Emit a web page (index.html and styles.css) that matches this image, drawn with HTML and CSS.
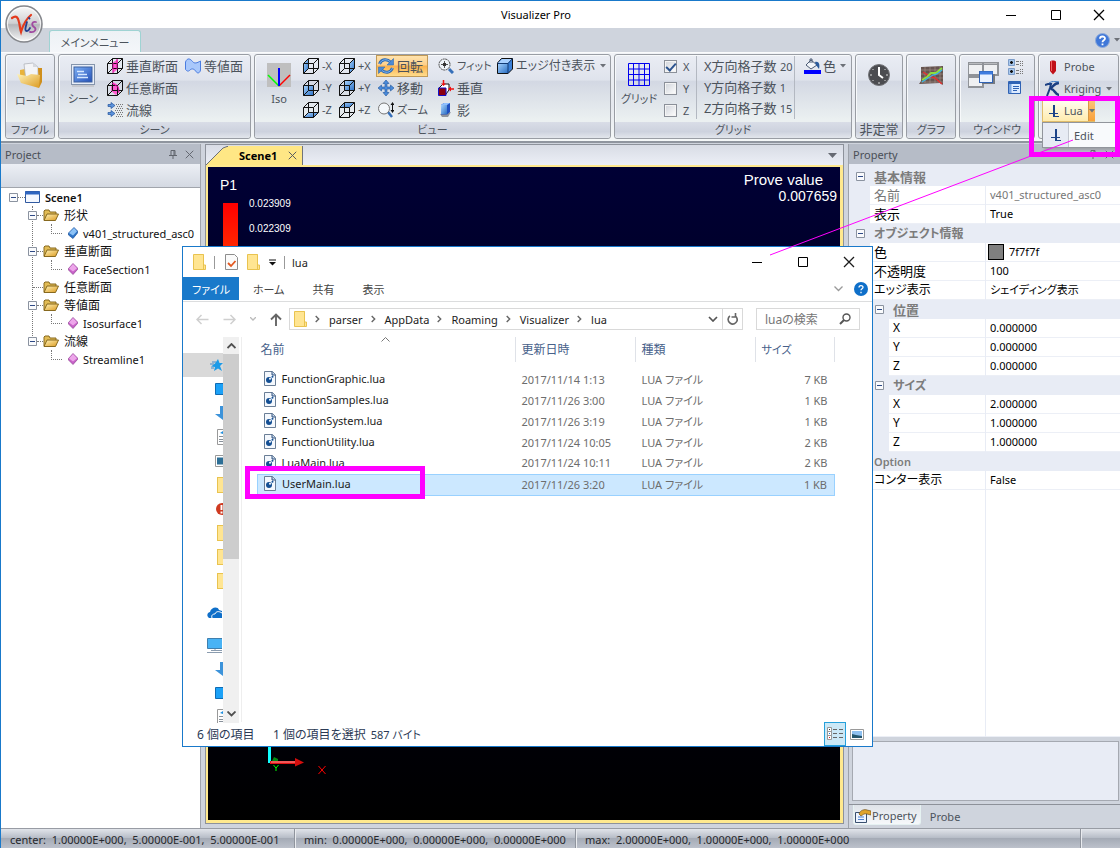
FILE: index.html
```html
<!DOCTYPE html>
<html lang="ja">
<head>
<meta charset="utf-8">
<title>Visualizer Pro</title>
<link rel="stylesheet" href="styles.css">
</head>
<body>
<svg class="defs" aria-hidden="true">
  <defs>
    <linearGradient id="gBlue" x1="0" y1="0" x2="1" y2="1"><stop offset="0" stop-color="#a8d4ff"/><stop offset="1" stop-color="#2a6fc4"/></linearGradient>
    <linearGradient id="gGold" x1="0" y1="0" x2="1" y2="1"><stop offset="0" stop-color="#fff3b8"/><stop offset="1" stop-color="#dc9a20"/></linearGradient>
    <linearGradient id="gPink" x1="0" y1="0" x2="1" y2="1"><stop offset="0" stop-color="#f6b8f4"/><stop offset="1" stop-color="#9c3aa0"/></linearGradient>
    <linearGradient id="gOrb" x1="0" y1="0" x2="0" y2="1"><stop offset="0" stop-color="#fafafa"/><stop offset=".48" stop-color="#cfd0d2"/><stop offset=".52" stop-color="#b4b6ba"/><stop offset="1" stop-color="#f8f8f8"/></linearGradient>
    <linearGradient id="gScreen" x1="0" y1="0" x2="1" y2="1"><stop offset="0" stop-color="#7eb0f4"/><stop offset="1" stop-color="#2350b8"/></linearGradient>
  </defs>
  <symbol id="cube" viewBox="0 0 16 16"><path d="M.5 5.500h10v10h-10zM5.500.500h10v10h-10zM.5 5.500l5-5M10.500 5.500l5-5M.5 15.500l5-5M10.500 15.500l5-5" fill="none" stroke="#111"/></symbol>
  <symbol id="dd" viewBox="0 0 6 4"><path d="M0 0h6L3 3.500z" fill="#6d7178"/></symbol>
  <symbol id="folder" viewBox="0 0 16 12"><path d="M1 11V2l1-1h4l1 2h6v2" fill="#e2bc55" stroke="#87691f"/><path d="M1 11.500L4 5h11.500l-3 6.500z" fill="url(#gGold)" stroke="#87691f"/></symbol>
  <symbol id="gem" viewBox="0 0 10 12"><path d="M5 .5L9.500 5v1.500L5 11.500.5 7V5.500z" fill="#c860c8" stroke="#8e4292" stroke-width=".7"/><path d="M5 1l4 4.200-4 3.300-4-3z" fill="#eda6ea"/></symbol>
  <symbol id="gemblue" viewBox="0 0 10 12"><path d="M6 .5L9.500 4v2L5 11.500.5 8V6z" fill="#2c74c8" stroke="#1d5299" stroke-width=".7"/><path d="M6 1l3 3.200-4 4.300-4-2.500z" fill="#8cc2f6"/></symbol>
  <symbol id="yfolder" viewBox="0 0 13 16"><path d="M.5.500h10v10.500h2v4.500H.5z" fill="#ffe592" stroke="#e9c34f"/><path d="M10.500 11v4.500M10.500.500v9" stroke="#e9c34f"/></symbol>
  <symbol id="luafile" viewBox="0 0 12 15"><path d="M.5.500h8l3 3v11H.5z" fill="#f4f8fd" stroke="#6a7e96"/><path d="M8 .5v3.500h3.500" fill="#c7d8ec" stroke="#31507c"/><circle cx="5" cy="9" r="3" fill="#134f94"/><circle cx="6" cy="7.700" r="1" fill="#fff"/><circle cx="8.500" cy="5.800" r="1" fill="#134f94"/></symbol>
  <symbol id="lua" viewBox="0 0 10 12"><path d="M5 0v12" stroke="#1c4388" stroke-width="2"/><path d="M0 8.500h9M5 11.500h5" stroke="#1c4388" stroke-width="1.200"/></symbol>
  <symbol id="pin" viewBox="0 0 8 9"><path d="M2 .5h4v5H2zM0 5.500h8M4 5.500V9M5 .5v5" fill="none" stroke="#60646c"/></symbol>
  <symbol id="close" viewBox="0 0 12 12"><path d="M1 1l10 10M11 1L1 11" fill="none" stroke="currentColor" stroke-width="1.300"/></symbol>
  <symbol id="minus" viewBox="0 0 9 9"><path d="M.5.500h8v8h-8z" fill="#fafbfd" stroke="#8b93a0"/><path d="M2 4.500h5" stroke="#2e4a86"/></symbol>
  <symbol id="chev" viewBox="0 0 5 8"><path d="M.7 1l3 3-3 3" fill="none" stroke="#666" stroke-width="1.400"/></symbol>
  <symbol id="desk" viewBox="0 0 8 12"><path d="M.5.500H12v11H.5z" fill="#1ba1f7" stroke="#0f6cb4"/></symbol>
  <symbol id="down" viewBox="0 0 8 14"><path d="M5 0h3v14L0 8h5z" fill="#3c93da"/></symbol>
  <symbol id="doc" viewBox="0 0 6 16"><path d="M6 .5H.5v15H6" fill="#fff" stroke="#999"/><path d="M2 7.500h4M2 10.500h4M2 12.500h4" stroke="#87909a"/><path d="M3 4l3-2v3z" fill="#1f8fe0"/></symbol>
</svg>

<div class="app">
  <header class="titlebar">
    <h1 class="app-title">Visualizer Pro</h1>
    <div class="win-buttons">
      <button class="win-btn" aria-label="最小化"><svg width="12" height="12"><path d="M1 6.500h10" stroke="#000"/></svg></button>
      <button class="win-btn" aria-label="最大化"><svg width="12" height="12"><path d="M1.500 1.500h9v9h-9z" fill="none" stroke="#000"/></svg></button>
      <button class="win-btn" aria-label="閉じる"><svg width="12" height="12"><use href="#close"/></svg></button>
    </div>
  </header>
  <button class="orb" aria-label="アプリケーション">
    <svg width="38" height="38" viewBox="0 0 38 38"><circle cx="19" cy="19" r="18" fill="url(#gOrb)" stroke="#85878c" stroke-width="1.500"/><circle cx="19" cy="19" r="16.500" fill="none" stroke="#fff" opacity=".8"/><path d="M7 13c4-3 6-1 7 4 1 4 1 7 2 10 2-7 5-13 10-17" fill="none" stroke="#e33a1c" stroke-width="2.200" stroke-linecap="round"/><path d="M22 17c-1 4-3 9 0 9 1 0 2-1 3-3M24 13l.5.5" fill="none" stroke="#27408f" stroke-width="1.800" stroke-linecap="round"/><path d="M31 17c-4-1-5 3-2 5s1 6-4 5" fill="none" stroke="#a04aa0" stroke-width="1.800" stroke-linecap="round"/></svg>
  </button>

  <nav class="tabrow">
    <button class="main-tab">メインメニュー</button>
    <div class="help-area">
      <button class="plain" aria-label="ヘルプ"><svg width="15" height="15" viewBox="0 0 15 15"><circle cx="7.500" cy="7.500" r="7" fill="#3f77d8" stroke="#8eabdb"/><path d="M5 5.800C5 2.800 10 2.800 10 5.500c0 1.900-2.500 1.700-2.500 3.700M7.500 10.500v1.700" fill="none" stroke="#fff" stroke-width="1.800"/></svg></button>
      <svg width="6" height="4"><use href="#dd"/></svg>
    </div>
  </nav>

  <section class="ribbon">
    <div class="group g-file">
      <div class="group-body">
        <button class="big"><svg width="28" height="28" viewBox="0 0 28 28"><path d="M4 8l5-1 3 14-8-4z" fill="#e8b33c"/><path d="M8 2l9-1 5 4v18l-12-4z" fill="#f3f4f7" stroke="#a9acb3" stroke-width=".7"/><path d="M17 1v4h5" fill="#d5d8de"/><path d="M22 6h4v14l-3 6z" fill="#cf8f1c"/><path d="M1 12l10 2 4-2 9 1-1 13L5 21z" fill="url(#gGold)"/></svg><span>ロード</span></button>
      </div>
      <div class="caption">ファイル</div>
    </div>

    <div class="group g-scene">
      <div class="group-body">
        <button class="big"><svg width="26" height="26" viewBox="0 0 26 26"><rect x="1.500" y="2.500" width="23" height="20" fill="#e8eef8" stroke="#8494ac"/><rect x="4" y="5" width="18" height="15" fill="url(#gScreen)" stroke="#3c5f9d"/><path d="M7 9.500h7M8 12.500h9M7 15.500h11" stroke="#d6e8ff" stroke-width="1.500"/><path d="M2 24h22" stroke="#c6c8ce" stroke-width="2"/></svg><span>シーン</span></button>
        <div class="cols c-scene">
          <button class="small"><svg width="16" height="16"><path d="M5 5l6-4v10l-5 4z" fill="#ff5bd0"/><use href="#cube"/><path d="M6 5v10M10 1v10" stroke="#d01098"/></svg>垂直断面</button>
          <button class="small"><svg width="16" height="16" viewBox="0 0 16 16"><path d="M.5 4c2-5 5-3 7-.5S12 5 15.500 3v9c-.5 3-3 4-4.500 1.500S7 10 5 12s-3 1-4.500-.5z" fill="#a9c8fb" stroke="#4a7ce0"/></svg>等値面</button>
          <button class="small"><svg width="16" height="16"><path d="M6 2l5 3 2 6-4 4-5-4V7z" fill="#ff5bd0"/><use href="#cube"/><path d="M5 3l6 4 1 6" fill="none" stroke="#d01098"/></svg>任意断面</button>
          <span></span>
          <button class="small"><svg width="16" height="16" viewBox="0 0 16 16"><path d="M1 2.500h3v-2l4 3-4 3v-2H1zM1 10.500h3v-2l4 3-4 3v-2H1z" fill="#5b93dc" stroke="#23539c" stroke-width=".7"/><path d="M9 2.500h7M10 4.500h6M9 6.500h7M8 8.500h8M9 10.500h7M10 12.500h6M9 14.500h7" stroke="#777" stroke-dasharray="1 1"/></svg>流線</button>
        </div>
      </div>
      <div class="caption">シーン</div>
    </div>

    <div class="group g-view">
      <div class="group-body">
        <button class="big latin"><svg width="24" height="26" viewBox="0 0 24 26"><path d="M0 1h24v24H0z" fill="#bfbfbf"/><path d="M1 13l11 11" stroke="#0f0" stroke-width="1.500"/><path d="M23 13L12 24" stroke="#f00" stroke-width="1.500"/><path d="M12 6v18" stroke="#00f" stroke-width="2"/></svg><span>Iso</span></button>
        <div class="cols c-view">
          <button class="small latin"><svg width="16" height="16"><path d="M1 5.500l4.500-5v10L1 15z" fill="url(#gBlue)"/><use href="#cube"/></svg>-X</button>
          <button class="small latin"><svg width="16" height="16"><path d="M10.500 5.500l5-5v10l-5 5z" fill="url(#gBlue)"/><use href="#cube"/></svg>+X</button>
          <button class="small active"><svg width="16" height="16" viewBox="0 0 16 16"><path d="M1.500 6C3.500 1 9 .5 12.500 4M14.500 10C12.500 15 7 15.500 3.500 12" fill="none" stroke="#2f6bb5" stroke-width="3"/><path d="M1.500 6C3.500 1 9 .5 12.500 4M14.500 10C12.500 15 7 15.500 3.500 12" fill="none" stroke="#7db4ee" stroke-width="1"/><path d="M15.500.500v6.500H9zM.5 15.500V9H7z" fill="#4a8ad6" stroke="#2f6bb5" stroke-width=".6"/></svg>回転</button>
          <button class="small kana"><svg width="16" height="16" viewBox="0 0 16 16"><path d="M11 11l4 4" stroke="#356fb9" stroke-width="3"/><circle cx="6.500" cy="6.500" r="5.500" fill="#eef3f8" stroke="#444" stroke-dasharray="2 .6"/><path d="M6.500 3v7M3 6.500h7" stroke="#555"/><path d="M5 5h3v3H5z" fill="#333"/></svg>フィット</button>
          <button class="small mixed"><svg width="16" height="16" viewBox="0 0 16 16"><path d="M.5 5l4-4.500h11V11l-4.500 4.500H.5z" fill="#3b80d8" stroke="#111"/><path d="M1 5l4-4h10l-4 4z" fill="#a8d0ff"/><path d="M11 5h-10v10h10z" fill="url(#gBlue)"/><path d="M.5 5.500h10.500v10M11 5.500l4.500-5" fill="none" stroke="#123a74"/></svg>エッジ付き表示<svg class="arrow" width="6" height="4"><use href="#dd"/></svg></button>
          <button class="small latin"><svg width="16" height="16"><path d="M.5 5.500h10v10h-10z" fill="url(#gBlue)"/><use href="#cube"/></svg>-Y</button>
          <button class="small latin"><svg width="16" height="16"><path d="M5.500.500h10v10h-10z" fill="url(#gBlue)"/><use href="#cube"/></svg>+Y</button>
          <button class="small"><svg width="16" height="16" viewBox="0 0 16 16"><path d="M8 0l3 3.500H9V7h3.500V5L16 8l-3.500 3V9H9v3.500h2L8 16l-3-3.500h2V9H3.500v2L0 8l3.500-3v2H7V3.500H5z" fill="#4b8bdb" stroke="#1f559c" stroke-width=".6"/></svg>移動</button>
          <button class="small"><svg width="16" height="16" viewBox="0 0 16 16"><path d="M1 8l4-4h6v6l-3 4" fill="#fff" stroke="#111"/><path d="M.5 8h7.500v7.500H.5z" fill="#8a0010" stroke="#1111cc"/><path d="M5.500 0v5M16 9h-5" stroke="#f01010" stroke-width="1.500"/><path d="M3 3.500h5L5.500 6zM13 6.500v5L10 9z" fill="#f01010"/></svg>垂直</button>
          <span></span>
          <button class="small latin"><svg width="16" height="16"><path d="M1 15.500l4.500-5h10l-5 5z" fill="url(#gBlue)"/><use href="#cube"/></svg>-Z</button>
          <button class="small latin"><svg width="16" height="16"><path d="M1 5.500l4.500-5h10l-5 5z" fill="url(#gBlue)"/><use href="#cube"/></svg>+Z</button>
          <button class="small kana"><svg width="16" height="16" viewBox="0 0 16 16"><path d="M10 10l4 5" stroke="#356fb9" stroke-width="2.500"/><circle cx="6" cy="6.500" r="5.500" fill="#f4f8fb" stroke="#777"/><path d="M14.500 2v7" stroke="#111"/><path d="M12.500 3l2-3 2 3zM12.500 8l2 3 2-3z" fill="#111"/></svg>ズーム</button>
          <button class="small"><svg width="16" height="16" viewBox="0 0 16 16"><path d="M2 12l11-2-3 5H4z" fill="#8e939b"/><path d="M3 3l3-2h6v9l-3 2.500H3z" fill="#1f4fc0"/><path d="M3 3l3-2h6L9 3z" fill="#8fc0ff"/><path d="M3 3h6v9H3z" fill="url(#gBlue)"/></svg>影</button>
        </div>
      </div>
      <div class="caption">ビュー</div>
    </div>

    <div class="group g-grid">
      <div class="group-body">
        <button class="big"><svg width="24" height="26" viewBox="0 0 24 26"><path d="M1.500 1.500h21v22h-21zM1.500 7h21M1.500 12.500h21M1.500 18h21M6.500 1v23M12 1v23M17.500 1v23" fill="none" stroke="#0000f0"/></svg><span>グリッド</span></button>
        <div class="checks latin">
          <label><input type="checkbox" checked>X</label>
          <label><input type="checkbox">Y</label>
          <label><input type="checkbox">Z</label>
        </div>
        <div class="counts">
          <span>X方向格子数 <b>20</b></span>
          <span>Y方向格子数 <b>1</b></span>
          <span>Z方向格子数 <b>15</b></span>
        </div>
        <button class="small color"><svg width="17" height="16" viewBox="0 0 17 16"><path d="M0 12h17v4H0z" fill="#00f"/><path d="M7 2l6 5-6 4-5-4z" fill="#f2f5fa" stroke="#4b5a74"/><path d="M6 5V1h2v4" fill="none" stroke="#4b5a74"/><path d="M11 4c4-1 5 2 4 7l-3-4z" fill="#2a5a9c"/></svg>色<svg class="arrow" width="6" height="4"><use href="#dd"/></svg></button>
      </div>
      <div class="caption">グリッド</div>
    </div>

    <div class="group g-time">
      <div class="group-body">
        <button class="big" aria-label="非定常"><svg width="24" height="26" viewBox="0 0 24 26"><circle cx="12" cy="13" r="10.500" fill="#4b4c50" stroke="#737478"/><path d="M12 5v8l4 3" fill="none" stroke="#fff" stroke-width="2"/><path d="M3 13h2M19 13h2M12 20v2M5.500 7l1 1M18.500 7l-1 1M5.500 19l1-1M18.500 19l-1-1" stroke="#ddd"/></svg></button>
      </div>
      <div class="caption">非定常</div>
    </div>

    <div class="group g-graph">
      <div class="group-body">
        <button class="big" aria-label="グラフ"><svg width="26" height="26" viewBox="0 0 26 26"><path d="M3 5l22-1v19l-3-2-21 1 2-3z" fill="#66544f"/><path d="M3 8h22M3 12h22M3 16h22M3 20h22M7 5v16M12 5v16M17 4v17M22 4v17" stroke="#a8948e" stroke-width=".6"/><path d="M5 10l6 4 6 2 7 6" fill="none" stroke="#e23030" stroke-width="1.500"/><path d="M4 18l5-3 4-4 5 0 6-5" fill="none" stroke="#8fe03a" stroke-width="1.800"/><path d="M4 20l6-4 5-3 4-1 5-4" fill="none" stroke="#39b8e8" stroke-width="1.300"/></svg></button>
      </div>
      <div class="caption">グラフ</div>
    </div>

    <div class="group g-window">
      <div class="group-body">
        <button class="plain" aria-label="ウインドウの整列"><svg width="32" height="28" viewBox="0 0 32 28"><path d="M0 1h31v14H16v12H0z" fill="#909398"/><path d="M1 4h13v9H1zM16 4h13v9H16zM1 17h13v8H1z" fill="#eff0f2"/><path d="M1 2.500h13M16 2.500h13" stroke="#b9bbbf"/><path d="M14 13h13v10H14z" fill="#777a80"/><rect x="11.500" y="10.500" width="13" height="11" fill="#eaf2ff" stroke="#2f62b4"/><path d="M12 12h12.500" stroke="#3f7de0" stroke-width="3"/></svg></button>
        <div class="mini">
          <button class="plain" aria-label="ツリー"><svg width="17" height="16" viewBox="0 0 17 16"><path d="M.5.500h6v6h-6zM.5 9.500h6v6h-6z" fill="#a8c8ee" stroke="#7c9cc8"/><path d="M2 3.500h3M3.500 2v3M2 12.500h3M3.500 11v3" stroke="#111" stroke-width="1.400"/><path d="M8 2.500h3M8 5.500h3M8 11.500h3M8 14.500h3" stroke="#777"/><path d="M12 2.500h4M12 4.500h4M12 6.500h4M12 10.500h4M12 12.500h4M12 14.500h4" stroke="#777" stroke-dasharray="1 1"/></svg></button>
          <button class="plain" aria-label="プロパティ"><svg width="13" height="13" viewBox="0 0 13 13"><path d="M.5.500h12v12H.5z" fill="#dceaff" stroke="#2f62b4"/><path d="M1 2h11" stroke="#2f62b4" stroke-width="2"/><path d="M5 5.500h6M5 7.500h6M5 9.500h4" stroke="#2f62b4"/><path d="M1 3h2.500v9H1z" fill="#7aa4e0"/></svg></button>
        </div>
      </div>
      <div class="caption">ウインドウ</div>
    </div>

    <div class="group g-tools">
      <div class="tools latin">
        <button class="small"><svg width="16" height="16" viewBox="0 0 16 16"><path d="M5 2.500c1-1.500 5-1.500 6 0V12l-3 3.500L5 12z" fill="#c01018"/><path d="M6.500 2v10" stroke="#f06060"/></svg>Probe</button>
        <button class="small"><svg width="16" height="16" viewBox="0 0 16 16"><path d="M0 4l3-1h3l-1 4-3 8" fill="none" stroke="#1b3f83" stroke-width="2"/><path d="M5 8C9 5 9 2 14 2M6 8c4 0 4 6 8 6" fill="none" stroke="#1b3f83" stroke-width="2.500"/><path d="M4 2c3-2 6-2 10-1" fill="none" stroke="#3d7dc8"/></svg>Kriging<svg class="arrow" width="6" height="4"><use href="#dd"/></svg></button>
        <button class="small lua-btn"><svg width="10" height="12"><use href="#lua"/></svg>Lua<span class="split"><svg width="6" height="4"><use href="#dd"/></svg></span></button>
      </div>
      <div class="lua-menu latin"><button class="menu-item"><span class="menu-icon"><svg width="10" height="12"><use href="#lua"/></svg></span>Edit</button></div>
    </div>
  </section>

  <main class="workspace">
    <aside class="project">
      <div class="pane-title">Project<span class="pane-tools"><svg width="8" height="9"><use href="#pin"/></svg><svg width="9" height="9"><use href="#close"/></svg></span></div>
      <div class="pane-strip"></div>
      <ul class="tree">
        <li class="l0"><svg width="9" height="9"><use href="#minus"/></svg><i></i><svg width="15" height="12" viewBox="0 0 15 12"><path d="M.5.500h14v11H.5z" fill="#f4f8ff" stroke="#30599f"/><path d="M0 2h15" stroke="#2f66c0" stroke-width="3"/></svg><strong>Scene1</strong></li>
        <li class="l1"><svg width="9" height="9"><use href="#minus"/></svg><i></i><svg width="16" height="12"><use href="#folder"/></svg>形状</li>
        <li class="l2"><i></i><svg width="10" height="12"><use href="#gemblue"/></svg>v401_structured_asc0</li>
        <li class="l1"><svg width="9" height="9"><use href="#minus"/></svg><i></i><svg width="16" height="12"><use href="#folder"/></svg>垂直断面</li>
        <li class="l2"><i></i><svg width="10" height="12"><use href="#gem"/></svg>FaceSection1</li>
        <li class="l1 leaf"><i></i><svg width="16" height="12"><use href="#folder"/></svg>任意断面</li>
        <li class="l1"><svg width="9" height="9"><use href="#minus"/></svg><i></i><svg width="16" height="12"><use href="#folder"/></svg>等値面</li>
        <li class="l2"><i></i><svg width="10" height="12"><use href="#gem"/></svg>Isosurface1</li>
        <li class="l1"><svg width="9" height="9"><use href="#minus"/></svg><i></i><svg width="16" height="12"><use href="#folder"/></svg>流線</li>
        <li class="l2"><i></i><svg width="10" height="12"><use href="#gem"/></svg>Streamline1</li>
      </ul>
    </aside>

    <section class="document">
      <div class="doc-tabs">
        <div class="doc-tab"><svg class="tab-slant" width="22" height="19" viewBox="0 0 22 19"><path d="M0 19L17 2l4-1.500h1V19z" fill="#ffe785"/><path d="M0 19L17 2l4-1.500h1" fill="none" stroke="#6b6f76"/></svg><strong>Scene1</strong><svg width="9" height="9"><use href="#close"/></svg></div>
        <svg class="tab-menu" width="9" height="5" viewBox="0 0 9 5"><path d="M0 0h9L4.500 5z" fill="#666a72"/></svg>
      </div>
      <div class="viewport">
        <div class="legend">
          <div class="legend-name">P1</div>
          <div class="legend-scale"><div class="bar"></div><div class="ticks"><span>0.023909</span><span>0.022309</span></div></div>
        </div>
        <div class="probe-value"><span>Prove value</span><span>0.007659</span></div>
        <svg class="axes" width="70" height="40" viewBox="0 0 70 40"><path d="M6 21l2-4 4 2v3z" fill="#008a10"/><path d="M3.500 0v23" stroke="#1ff" stroke-width="3"/><path d="M4 22.500h27" stroke="#e01414" stroke-width="3"/><path d="M5 22h24" stroke="#ff9a9a"/><path d="M29 18l9 4.500-9 4z" fill="#d40d0d"/><path d="M7.500 25l2.500 3 2.500-3M10 28v3" fill="none" stroke="#0f0"/><path d="M52.500 26l7 8M59.500 26l-7 8" stroke="#f00"/></svg>
      </div>
    </section>

    <aside class="property">
      <div class="pane-title">Property<span class="pane-tools"><svg width="8" height="9"><use href="#pin"/></svg><svg width="9" height="9"><use href="#close"/></svg></span></div>
      <div class="props">
        <div class="cat"><svg width="9" height="9"><use href="#minus"/></svg>基本情報</div>
        <div class="prop dim"><span>名前</span><span>v401_structured_asc0</span></div>
        <div class="prop"><span>表示</span><span>True</span></div>
        <div class="cat kana"><svg width="9" height="9"><use href="#minus"/></svg>オブジェクト情報</div>
        <div class="prop"><span>色</span><span><i class="swatch"></i>7f7f7f</span></div>
        <div class="prop"><span>不透明度</span><span>100</span></div>
        <div class="prop kana"><span>エッジ表示</span><span class="jp">シェイディング表示</span></div>
        <div class="cat sub"><svg width="9" height="9"><use href="#minus"/></svg>位置</div>
        <div class="prop sub"><span>X</span><span>0.000000</span></div>
        <div class="prop sub"><span>Y</span><span>0.000000</span></div>
        <div class="prop sub"><span>Z</span><span>0.000000</span></div>
        <div class="cat sub kana"><svg width="9" height="9"><use href="#minus"/></svg>サイズ</div>
        <div class="prop sub"><span>X</span><span>2.000000</span></div>
        <div class="prop sub"><span>Y</span><span>1.000000</span></div>
        <div class="prop sub"><span>Z</span><span>1.000000</span></div>
        <div class="cat latin"><svg width="9" height="9"><use href="#minus"/></svg>Option</div>
        <div class="prop kana"><span>コンター表示</span><span>False</span></div>
        <div class="prop filler"><span></span><span></span></div>
      </div>
      <div class="description"></div>
      <div class="prop-tabs">
        <button class="ptab on"><svg width="16" height="14" viewBox="0 0 16 14"><path d="M.5 3.500h11v10H.5z" fill="#eef4ff" stroke="#38506f"/><path d="M3 8h6M3 10.500h6" stroke="#4c83d3"/><path d="M4 5c1-4 6-5 8-4l4 1v4l-4-1c-3-1-4 1-6 2z" fill="#e0a42c" stroke="#72511a" stroke-width=".7"/></svg>Property</button>
        <button class="ptab">Probe</button>
      </div>
    </aside>
  </main>

  <footer class="status">
    <span class="s1">center:&nbsp; 1.00000E+000,&nbsp; 5.00000E-001,&nbsp; 5.00000E-001</span>
    <span class="s2">min:&nbsp; 0.00000E+000,&nbsp; 0.00000E+000,&nbsp; 0.00000E+000</span>
    <span class="s3">max:&nbsp; 2.00000E+000,&nbsp; 1.00000E+000,&nbsp; 1.00000E+000</span>
    <span class="s4"></span>
  </footer>

  <section class="explorer">
    <header class="ex-title">
      <svg width="13" height="16"><use href="#yfolder"/></svg><i class="bar-sep"></i>
      <svg width="13" height="16" viewBox="0 0 13 16"><path d="M.5.500h9l3 3v12H.5z" fill="#fafafa" stroke="#8d8d8d"/><path d="M3 9l3 3 4.500-5" fill="none" stroke="#e2571e" stroke-width="1.800"/></svg>
      <svg width="13" height="16"><use href="#yfolder"/></svg>
      <svg width="7" height="7" viewBox="0 0 7 7"><path d="M0 1h7" stroke="#111"/><path d="M0 3h7L3.500 6.500z" fill="#111"/></svg><i class="bar-sep"></i>
      <span class="ex-name">lua</span>
      <div class="ex-buttons">
        <button class="win-btn" aria-label="最小化"><svg width="12" height="12"><path d="M1 6.500h10" stroke="#000"/></svg></button>
        <button class="win-btn" aria-label="最大化"><svg width="12" height="12"><path d="M1.500 1.500h9v9h-9z" fill="none" stroke="#000"/></svg></button>
        <button class="win-btn" aria-label="閉じる"><svg width="12" height="12"><use href="#close"/></svg></button>
      </div>
    </header>
    <nav class="ex-menu">
      <button class="file-tab">ファイル</button><button>ホーム</button><button>共有</button><button>表示</button>
      <div class="ex-help"><svg width="9" height="6" viewBox="0 0 9 6"><path d="M.5.500l4 4 4-4" fill="none" stroke="#999" stroke-width="1.300"/></svg><svg width="14" height="14" viewBox="0 0 14 14"><circle cx="7" cy="7" r="7" fill="#0f6fc9"/><path d="M5 5.500C5 3 9 3 9 5.300c0 1.500-2 1.400-2 3M7 9.700v1.500" fill="none" stroke="#fff" stroke-width="1.300"/></svg></div>
    </nav>
    <div class="ex-address">
      <div class="ex-nav">
        <button class="plain" aria-label="戻る"><svg width="13" height="11" viewBox="0 0 13 11"><path d="M12.500 5.500H1M5.500 1L1 5.500 5.500 10" fill="none" stroke="#cfcfcf" stroke-width="1.500"/></svg></button>
        <button class="plain" aria-label="進む"><svg width="13" height="11" viewBox="0 0 13 11"><path d="M.5 5.500H12M7.500 1L12 5.500 7.500 10" fill="none" stroke="#cfcfcf" stroke-width="1.500"/></svg></button>
        <svg width="6" height="4" viewBox="0 0 6 4"><path d="M0 0l3 3 3-3" fill="none" stroke="#bbb" stroke-width="1.300"/></svg>
        <button class="plain" aria-label="上へ"><svg width="12" height="13" viewBox="0 0 12 13"><path d="M6 13V1.500M1 6.500l5-5 5 5" fill="none" stroke="#666" stroke-width="1.900"/></svg></button>
      </div>
      <div class="crumbs">
        <svg width="13" height="16"><use href="#yfolder"/></svg>
        <svg width="5" height="8"><use href="#chev"/></svg><span>parser</span><svg width="5" height="8"><use href="#chev"/></svg><span>AppData</span><svg width="5" height="8"><use href="#chev"/></svg><span>Roaming</span><svg width="5" height="8"><use href="#chev"/></svg><span>Visualizer</span><svg width="5" height="8"><use href="#chev"/></svg><span>lua</span>
        <button class="plain drop" aria-label="履歴"><svg width="10" height="6" viewBox="0 0 10 6"><path d="M1 1l4 4 4-4" fill="none" stroke="#555" stroke-width="1.700"/></svg></button>
        <button class="plain refresh" aria-label="更新"><svg width="11" height="12" viewBox="0 0 11 12"><path d="M8.500 3C13 8 7 13 3 10 0 8 1 4 3 3M8.500 0v4h-4" fill="none" stroke="#666" stroke-width="1.600"/></svg></button>
      </div>
      <div class="search"><input type="text" aria-label="luaの検索" placeholder="luaの検索"><svg width="12" height="12" viewBox="0 0 12 12"><circle cx="7.500" cy="4.500" r="3.500" fill="none" stroke="#555" stroke-width="1.400"/><path d="M5 7L1 11" stroke="#555" stroke-width="2"/></svg></div>
    </div>
    <div class="ex-body">
      <div class="quick">
        <div class="q hl"><svg width="13" height="12" viewBox="0 0 13 12"><path d="M8 0l1.500 4L13 4l-3 3 2 5-4-2.500L4 12l1-4-4-.5 4-3z" fill="#1d9be8"/><path d="M0 5h4M1 9h3M2 3h4" stroke="#4b8cc8"/></svg></div>
        <div class="q"><svg width="8" height="12"><use href="#desk"/></svg></div>
        <div class="q"><svg width="8" height="14"><use href="#down"/></svg></div>
        <div class="q"><svg width="6" height="16"><use href="#doc"/></svg></div>
        <div class="q"><svg width="8" height="12" viewBox="0 0 8 12"><path d="M8 .5H.5v11H8" fill="#fff" stroke="#999"/><path d="M2 2.500h6v7H2z" fill="#2d6f96"/></svg></div>
        <div class="q"><i class="yf"></i></div>
        <div class="q"><svg width="8" height="14" viewBox="0 0 8 14"><circle cx="7" cy="7" r="6" fill="#cf3a20"/><path d="M6.500 3v5M6.500 9.500v2" stroke="#fff" stroke-width="2"/></svg></div>
        <div class="q"><i class="yf"></i></div>
        <div class="q"><i class="yf"></i></div>
        <div class="q"><i class="yf"></i></div>
        <div class="q wide"><svg width="15" height="12" viewBox="0 0 15 12"><path d="M1 10C-1 7 2 5 3 5c1-5 8-6 9-2l3 1v7H2z" fill="#0f6fc9"/><path d="M5 11c-1-3 1-4 3-4 1-3 4-3 7-1" fill="none" stroke="#fff"/></svg></div>
        <div class="q"><svg width="15" height="15" viewBox="0 0 15 15"><path d="M.5.500H16v10H.5z" fill="#48b3f5" stroke="#3f7fae"/><path d="M8 11v2M4 12.500h11M0 14.500h15" stroke="#8b9caf"/></svg></div>
        <div class="q"><svg width="8" height="14"><use href="#down"/></svg></div>
        <div class="q"><svg width="8" height="12"><use href="#desk"/></svg></div>
        <div class="q"><svg width="6" height="16"><use href="#doc"/></svg></div>
      </div>
      <div class="scroll"><svg width="9" height="6" viewBox="0 0 9 6"><path d="M.5 5l4-4 4 4" fill="none" stroke="#505050" stroke-width="1.800"/></svg><div class="thumb"></div><svg class="sdown" width="9" height="6" viewBox="0 0 9 6"><path d="M.5.500l4 4 4-4" fill="none" stroke="#505050" stroke-width="1.800"/></svg></div>
      <div class="files">
        <table>
          <thead><tr><th class="name"><span>名前<svg class="sort" width="9" height="5" viewBox="0 0 9 5"><path d="M.5 4.500l4-4 4 4" fill="none" stroke="#777"/></svg></span></th><th class="date"><span>更新日時</span></th><th class="type"><span>種類</span></th><th class="size"><span>サイズ</span></th></tr></thead>
          <tbody>
            <tr><td><svg width="12" height="15"><use href="#luafile"/></svg>FunctionGraphic.lua</td><td>2017/11/14 1:13</td><td>LUA ファイル</td><td>7 KB</td></tr>
            <tr><td><svg width="12" height="15"><use href="#luafile"/></svg>FunctionSamples.lua</td><td>2017/11/26 3:00</td><td>LUA ファイル</td><td>1 KB</td></tr>
            <tr><td><svg width="12" height="15"><use href="#luafile"/></svg>FunctionSystem.lua</td><td>2017/11/26 3:19</td><td>LUA ファイル</td><td>1 KB</td></tr>
            <tr><td><svg width="12" height="15"><use href="#luafile"/></svg>FunctionUtility.lua</td><td>2017/11/24 10:05</td><td>LUA ファイル</td><td>2 KB</td></tr>
            <tr><td><svg width="12" height="15"><use href="#luafile"/></svg>LuaMain.lua</td><td>2017/11/24 10:11</td><td>LUA ファイル</td><td>2 KB</td></tr>
            <tr class="selected"><td><svg width="12" height="15"><use href="#luafile"/></svg>UserMain.lua</td><td>2017/11/26 3:20</td><td>LUA ファイル</td><td>1 KB</td></tr>
          </tbody>
        </table>
      </div>
    </div>
    <footer class="ex-status">
      <span class="count">6 個の項目</span><span>1 個の項目を選択</span><span class="bytes">587 バイト</span>
      <div class="views">
        <button class="plain view on" aria-label="詳細"><svg width="16" height="14" viewBox="0 0 16 14"><path d="M.5.500h4v12h-4zM.5 4.500h4M.5 8.500h4" fill="#fff" stroke="#999"/><path d="M6 2.500h4M12 2.500h4M6 6.500h4M12 6.500h4M6 10.500h4M12 10.500h4" stroke="#666"/><path d="M2 2h1v1H2z" fill="#333"/><path d="M2 6h1v1H2z" fill="#1976d2"/><path d="M2 10h1v1H2z" fill="#d32020"/></svg></button>
        <button class="plain view" aria-label="大アイコン"><svg width="14" height="11" viewBox="0 0 14 11"><path d="M.5.500h13v10H.5z" fill="#fff" stroke="#999"/><path d="M2 2h10v7H2z" fill="#8ec0f0"/><path d="M2 5l4 1 6 1v2H2z" fill="#24566e"/></svg></button>
      </div>
    </footer>
  </section>

  <svg class="pointer" width="306" height="118"><path d="M304 1L1 116" stroke="#f0f"/></svg>
  <div class="mark mark-lua"></div>
  <div class="mark mark-file"></div>
</div>
</body>
</html>
```

FILE: styles.css
```css
* { box-sizing: border-box; }
body { margin: 0; font-family: "Noto Sans", "Noto Sans CJK JP", sans-serif; font-size: 11px; color: #000; font-feature-settings: "palt"; }
button { font: inherit; font-feature-settings: inherit; color: inherit; border: 0; background: none; padding: 0; margin: 0; }
svg { flex: none; display: block; }
i { font-style: normal; flex: none; }
.defs { position: absolute; width: 0; height: 0; }
.app { position: relative; min-height: 100vh; display: flex; flex-direction: column; background: #cfd4dd; border-left: 1px solid #1979ca; border-top: 1px solid #1979ca; overflow: hidden; }
.latin { font-size: 11px; }
.plain { display: block; }

/* Title bar and ribbon tabs */
.titlebar { height: 27px; background: #fff; display: grid; grid-template-columns: 1fr auto 1fr; align-items: center; }
.app-title { grid-column: 2; margin: 0; font-size: 11px; font-weight: 400; padding-right: 49px; }
.win-buttons { display: flex; justify-content: flex-end; }
.win-btn { width: 46px; height: 27px; display: grid; place-items: center; }
.win-buttons .win-btn { width: 45px; }
.win-buttons .win-btn:last-child { width: 42px; }
.orb { position: absolute; left: 4px; top: 4px; z-index: 1; }
.tabrow { height: 24px; display: flex; align-items: flex-end; justify-content: space-between; }
.main-tab { width: 92px; height: 22px; margin-left: 48px; border: 1px solid #9fd3d3; border-bottom: 0; border-radius: 3px 3px 0 0; background: linear-gradient(#edf1f5, #f4f6f9); color: #4c535c; font-size: 11px; }
.help-area { display: flex; align-items: center; gap: 4px; height: 24px; }

/* Ribbon */
.ribbon { height: 91px; display: flex; gap: 3px; padding: 1px 1px 4px 4px; background: linear-gradient(#f1f3f7, #e5e8ee 60%, #f5f8f8); border-top: 1px solid #fafbfc; border-bottom: 2px solid #8f959e; color: #4c535c; }
.group { height: 85px; flex: none; display: flex; flex-direction: column; border: 1px solid #999da4; border-radius: 3px; background: linear-gradient(#eaedf4, #dfe3ec 30%, #d3d8e3 32%, #ebf0f1 78%); box-shadow: inset 1px 1px #f7f9fb; font-size: 13px; position: relative; }
.group-body { flex: 1; display: flex; min-height: 0; }
.caption { height: 16px; line-height: 15px; text-align: center; background: linear-gradient(#d9dde7, #cdd2de 60%, #e2e6ec); border-radius: 0 0 3px 3px; font-size: 11px; white-space: nowrap; }
.g-time .caption { font-size: 13px; }
.g-file { width: 50px; } .g-scene { width: 193px; } .g-view { width: 357px; } .g-grid { width: 238px; }
.g-time { width: 48px; } .g-graph { width: 50px; } .g-window { width: 76px; } .g-tools { flex: 1 0 80px; }
.big { width: 48px; padding-top: 7px; display: flex; flex-direction: column; align-items: center; gap: 2px; font-size: 11px; line-height: 18px; white-space: nowrap; }
.g-time .big, .g-graph .big { width: 100%; }
.cols { display: grid; grid-auto-rows: 22px; align-content: start; }
.c-scene { grid-template-columns: 78px 64px; }
.c-view { grid-template-columns: 36px 37px 60px 59px 112px; }
.small { display: flex; align-items: center; gap: 3px; height: 22px; font-size: 13px; line-height: 20px; white-space: nowrap; }
.small.latin, .small.kana, .tools .small { font-size: 11px; }
.small.mixed { font-size: 12px; }
.c-view .small:not(.latin) { padding-left: 2px; }
.arrow { margin-left: 2px; }
.small.active { width: 52px; border: 1px solid #c19a58; background: linear-gradient(#ffe3ae, #fdcf8a 45%, #fbb24e 50%, #ffdc8c); }
.c-view .small.active { padding-left: 1px; }
.checks { width: 32px; display: flex; flex-direction: column; margin-left: 1px; }
.checks label { height: 22px; display: flex; align-items: center; gap: 6px; }
.checks input { appearance: none; width: 13px; height: 13px; margin: 0; border: 1px solid #8b9099; background: linear-gradient(135deg, #cfd3da, #fff); box-shadow: inset 0 0 0 1px #f4f4f4; display: grid; place-items: center; }
.checks input:checked::after { content: ""; width: 4px; height: 8px; margin-bottom: 2px; border: solid #2b538f; border-width: 0 2px 2px 0; transform: rotate(42deg); }
.counts { width: 99px; height: 63px; margin-top: 1px; padding-left: 7px; border-left: 1px solid #b3b8c1; border-right: 1px solid #b3b8c1; display: flex; flex-direction: column; line-height: 21px; white-space: nowrap; }
.counts b { font-weight: 400; font-size: 11px; }
.color { margin-left: 9px; gap: 2px; }
.g-window .group-body { padding: 6px 0 0 8px; gap: 8px; align-items: flex-start; }
.mini { display: flex; flex-direction: column; gap: 6px; margin-top: -2px; }
.tools { display: flex; flex-direction: column; padding: 1px 3px; }
.tools .small { padding-left: 3px; gap: 3px; }
.tools .lua-btn { width: 53px; border: 1px solid #e0bd6c; background: linear-gradient(#fffdf0, #ffecae); padding-left: 6px; gap: 5px; position: relative; z-index: 1; }
.split { align-self: stretch; width: 13px; margin-left: auto; background: linear-gradient(#fbc277, #f9a13a); border-left: 1px solid #d59846; display: grid; place-items: center; }
.lua-menu { position: absolute; z-index: 3; left: 3px; right: -1px; top: 67px; height: 26px; background: #f8fafc; border: 1px solid #91959c; box-shadow: 2px 2px 2px #8888; }
.menu-item { display: flex; align-items: center; width: 100%; height: 24px; gap: 5px; }
.menu-icon { width: 26px; height: 100%; display: grid; place-items: center; background: #e7ebf4; border-right: 1px solid #c3c7d0; }

/* Project pane */
.workspace { flex: 1; display: flex; gap: 4px; padding-top: 1px; background: #cfd4dd; }
.project { width: 200px; flex: none; display: flex; flex-direction: column; background: #fff; border-right: 1px solid #a1a5ac; }
.pane-title { height: 20px; padding: 0 6px 0 4px; display: flex; align-items: center; justify-content: space-between; background: #b6bcc7; color: #4a4f57; font-size: 11px; }
.pane-tools { display: flex; align-items: center; gap: 8px; color: #62666e; }
.pane-strip { height: 24px; background: linear-gradient(#eceff5, #d4d9e2); border-bottom: 1px solid #a1a5ac; }
.tree { list-style: none; margin: 0; padding: 0; color: #111; position: relative; }
.tree li { height: 18px; display: flex; align-items: center; font-size: 12px; white-space: nowrap; }
.tree .l0, .tree .l2 { font-size: 11px; }
.tree svg { position: relative; }
.l0 { padding-left: 8px; }
.l0 strong { margin-left: 5px; font-weight: 600; }
.l1 { padding-left: 27px; }
.l0 i { width: 7px; border-top: 1px dotted #777; }
.l1 i { width: 6px; border-top: 1px dotted #777; }
.l1 i + svg { margin-right: 5px; }
.l1.leaf { padding-left: 32px; }
.l1.leaf i { width: 10px; }
.l2 { padding-left: 50px; }
.l2 i { width: 11px; height: 10px; border-left: 1px dotted #777; border-bottom: 1px dotted #777; margin-bottom: 8px; }
.l2 svg { margin: 0 5px 0 6px; }
.tree::before { content: ""; position: absolute; left: 31px; top: 18px; height: 136px; border-left: 1px dotted #777; }

/* Scene document */
.document { flex: 1; min-width: 0; display: flex; flex-direction: column; border: 1px solid #8d929b; margin-bottom: 4px; }
.doc-tabs { height: 20px; display: flex; align-items: flex-end; justify-content: space-between; background: linear-gradient(#d8dce5, #eceff6); }
.doc-tab { height: 19px; display: flex; align-items: center; padding-right: 5px; color: #54585f; background: linear-gradient(to right, transparent 22px, #ffe785 22px); border-right: 1px solid #70747b; }
.doc-tab strong { color: #000; font-weight: 700; margin: 0 11px; font-size: 11px; }
.tab-menu { margin: 0 6px 7px 0; }
.viewport { flex: 1; position: relative; display: flex; justify-content: space-between; border: 3px solid #ffe98e; border-left-width: 2px; border-top-width: 2px; background: linear-gradient(#000035, #000020 30%, #00000a 80%, #000); color: #fff; padding: 10px 3px 0 12px; font-family: "Liberation Sans", sans-serif; }
.legend-name { font-size: 14px; line-height: 16px; }
.legend-scale { display: flex; gap: 11px; padding: 10px 0 0 3px; }
.bar { width: 15px; height: 400px; background: linear-gradient(#f00, #ff2600 11%, #ff0 30%, #0f0 50%, #0ff 75%, #00f); }
.ticks { display: flex; flex-direction: column; font-size: 10px; line-height: 25px; margin-top: -12px; }
.probe-value { display: flex; flex-direction: column; font-size: 14px; line-height: 16px; text-align: right; margin-top: -5px; }
.probe-value span:first-child { padding-right: 14px; font-size: 15px; }
.axes { position: absolute; left: 58px; bottom: 40px; }

/* Property pane */
.property { width: 272px; flex: none; display: flex; flex-direction: column; border-left: 1px solid #9da2aa; }
.props { flex: 1; display: flex; flex-direction: column; background: #e8ecf5; padding-top: 3px; }
.cat { height: 19px; padding-left: 7px; display: flex; align-items: center; gap: 9px; font-size: 13px; line-height: 18px; font-weight: 600; color: #7c7c7c; white-space: nowrap; }
.cat.latin { font-size: 11px; }
.cat.kana { font-size: 12px; }
.cat.sub { padding-left: 26px; }
.prop { height: 19px; padding-left: 21px; display: grid; grid-template-columns: 115px 1fr; gap: 1px; font-size: 11px; }
.prop.sub { padding-left: 40px; grid-template-columns: 96px 1fr; }
.prop span { background: #fff; border-bottom: 1px solid #eceff6; line-height: 18px; padding-left: 4px; display: flex; align-items: center; white-space: nowrap; }
.prop span:first-child { font-size: 13px; }
.prop.sub span:first-child, .prop.kana span:first-child { font-size: 12px; }
.prop.dim { color: #777; }
.prop.filler { flex: 1; }
.swatch { width: 16px; height: 16px; background: #7f7f7f; border: 1px solid #000; margin: 0 5px 0 -2px; }
.description { height: 60px; margin: 4px 1px 3px 3px; border: 1px solid #a5a9b1; background: #e8ecf5; }
.prop-tabs { border-top: 1px solid #8d9199; height: 24px; display: flex; padding-left: 4px; color: #4c535c; }
.ptab { height: 22px; padding: 0 9px; display: flex; align-items: center; gap: 1px; }
.ptab.on { padding: 0 3px 0 1px; background: linear-gradient(#dfe3e9, #f6f8fa); border: 1px solid #e6f2f2; border-top: 0; border-radius: 0 0 3px 3px; height: 20px; padding-top: 2px; }

/* Status bar */
.status { height: 20px; display: flex; border-top: 1px solid #989ca4; background: linear-gradient(#e1e4ea, #b8bec8 45%, #a5abb6 50%, #bcc1cb); color: #26282c; line-height: 21px; white-space: nowrap; }
.status span { border-right: 1px solid #8f949d; box-shadow: 1px 0 #e9ebef; padding-left: 9px; }
.s1 { width: 294px; } .s2 { width: 281px; } .s3 { flex: 1; } .status .s4 { width: 39px; border: 0; }

/* File explorer window */
.explorer { position: absolute; z-index: 2; left: 181px; top: 245px; width: 691px; height: 501px; display: flex; flex-direction: column; background: #fff; border: 1px solid #1979ca; font-size: 11px; color: #1c1c1c; }
.ex-title { height: 30px; display: flex; align-items: center; padding-left: 10px; }
.ex-title > svg + svg { margin-left: 9px; }
.bar-sep { width: 1px; height: 13px; background: #999; margin: 0 10px 0 8px; }
.ex-name { margin-left: -3px; }
.ex-buttons { margin-left: auto; display: flex; }
.ex-menu { height: 25px; display: flex; border-bottom: 1px solid #dcddde; color: #444; }
.ex-menu button { height: 23px; padding: 0 14px; }
.ex-menu .file-tab { width: 56px; padding: 0; background: #1979ca; color: #fff; }
.ex-help { margin-left: auto; padding-right: 4px; display: flex; align-items: center; gap: 11px; }
.ex-address { height: 34px; display: flex; align-items: center; padding-right: 12px; }
.ex-nav { width: 106px; padding-left: 13px; display: flex; align-items: center; gap: 14px; }
.crumbs { flex: 1; height: 22px; border: 1px solid #d9d9d9; display: flex; align-items: center; padding-left: 4px; }
.crumbs > span { margin: 0 8px 0 9px; }
.crumbs > svg:first-child { margin-right: 8px; }
.drop { margin: 0 4px 0 auto; }
.refresh { width: 20px; height: 20px; border-left: 1px solid #d9d9d9; display: grid; place-items: center; }
.search { width: 104px; height: 22px; margin-left: 13px; border: 1px solid #d9d9d9; display: flex; align-items: center; padding: 0 8px; }
.search input { border: 0; padding: 0; width: 0; flex: 1; font: inherit; font-size: 12px; outline: 0; background: none; }
.search input::placeholder { color: #757575; }
.ex-body { flex: 1; min-height: 0; display: flex; padding-top: 1px; }
.quick { width: 40px; flex: none; overflow: hidden; padding-top: 16px; height: 386px; }
.q { height: 24px; display: flex; align-items: center; padding-left: 32px; }
.q.hl { background: #d9d9d9; padding-left: 27px; }
.q:nth-child(4), .q:nth-child(15) { padding-left: 34px; }
.q.wide, .q.wide + .q { height: 32px; padding-left: 24px; }
.q.wide + .q { margin-bottom: -4px; }
.q.wide { margin-top: 4px; }
.yf { width: 6px; height: 16px; margin-left: 2px; background: #ffe592; border: 1px solid #e9c34f; border-right: 0; }
.scroll { width: 16px; flex: none; background: #f0f0f0; height: 386px; display: flex; flex-direction: column; align-items: center; padding: 6px 0; }
.thumb { width: 16px; height: 205px; background: #cdcdcd; margin-top: 5px; }
.sdown { margin-top: auto; }
.files { flex: 1; min-width: 0; margin-left: 2px; border-left: 1px solid #eee; padding-left: 15px; }
table { width: 577px; border-collapse: collapse; table-layout: fixed; }
th { height: 32px; padding: 0; vertical-align: top; font-weight: 400; font-size: 12px; color: #47618a; text-align: left; }
th span { display: block; height: 25px; line-height: 25px; padding-left: 6px; border-left: 1px solid #dfe2e8; }
.name { width: 257px; } .date, .type { width: 120px; } .size { width: 80px; }
.name span { border: 0; padding-left: 3px; position: relative; }
.size span { border-right: 1px solid #dfe2e8; font-size: 11px; }
.sort { position: absolute; left: 123px; top: 0; }
td { height: 21px; padding: 0 7px; color: #6d6d6d; white-space: nowrap; vertical-align: middle; line-height: 18px; }
td:first-child { color: #1c1c1c; padding-left: 6px; }
td svg { display: inline-block; vertical-align: middle; margin: 0 6px 3px 0; }
td:last-child { text-align: right; }
.selected td { background: #cce8ff; border: solid #99d1ff; border-width: 1px 0; }
.selected td:first-child { border-left-width: 1px; }
.selected td:last-child { border-right-width: 1px; }
.ex-status { height: 24px; display: flex; align-items: center; padding-left: 14px; font-size: 12px; color: #2b3a55; }
.count { width: 76px; }
.bytes { font-size: 11px; margin-left: 5px; }
.views { margin-left: auto; display: flex; align-self: stretch; padding-right: 4px; }
.view { width: 22px; display: grid; place-items: center; }
.view.on { background: #cbe8f6; border: 1px solid #26a0da; }

/* Annotations */
.pointer { position: absolute; z-index: 4; left: 768px; top: 138px; }
.mark { position: absolute; z-index: 4; border: 5px solid #f0f; pointer-events: none; }
.mark-lua { right: 0; top: 95px; width: 91px; height: 61px; }
.mark-file { left: 244px; top: 465px; width: 180px; height: 33px; }
```
